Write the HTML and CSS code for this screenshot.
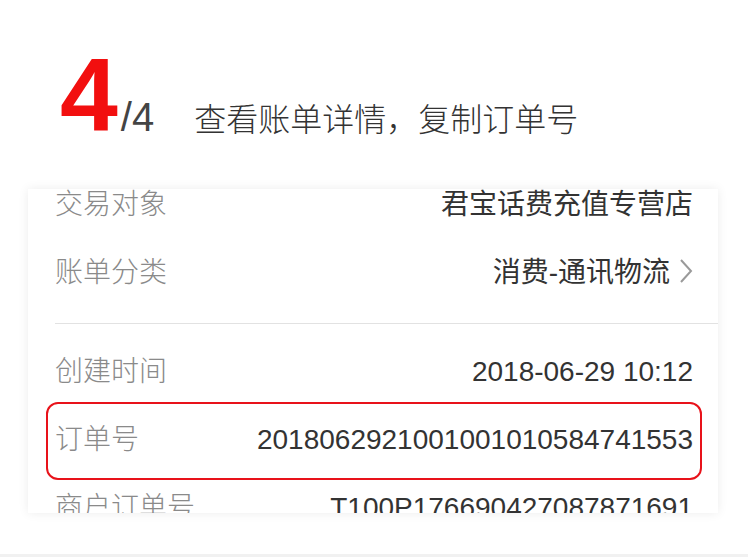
FILE: index.html
```html
<!DOCTYPE html>
<html lang="zh-CN">
<head>
<meta charset="utf-8">
<title>查看账单详情</title>
<link rel="stylesheet" href="styles.css">
</head>
<body>
<div class="page">
  <header class="step">
    <span class="step-num">4</span>
    <span class="step-total">/4</span>
    <span class="step-title">查看账单详情，复制订单号</span>
  </header>
  <section class="card">
    <div class="list">
      <div class="group first">
        <div class="row"><span class="label">交易对象</span><span class="value">君宝话费充值专营店</span></div>
        <div class="row"><span class="label">账单分类</span><span class="value with-arrow">消费-通讯物流<svg class="chev" width="14" height="26" viewBox="0 0 14 26"><polyline points="2,2 12,13 2,24" fill="none" stroke="#9a9a9a" stroke-width="2"/></svg></span></div>
      </div>
      <div class="divider"></div>
      <div class="group second">
        <div class="row"><span class="label">创建时间</span><span class="value">2018-06-29 10:12</span></div>
        <div class="row highlight"><span class="label">订单号</span><span class="value">2018062921001001010584741553</span></div>
        <div class="row"><span class="label">商户订单号</span><span class="value">T100P176690427087871691</span></div>
      </div>
    </div>
  </section>
  <div class="band"></div>
</div>
</body>
</html>
```
FILE: styles.css
```css
html, body {
  margin: 0;
  padding: 0;
  background: #ffffff;
}
body {
  font-family: "Liberation Sans", "Noto Sans CJK SC", sans-serif;
  overflow: hidden;
}
.page {
  width: 748px;
  height: 557px;
  display: flex;
  flex-direction: column;
  overflow: hidden;
}
.step {
  display: flex;
  align-items: baseline;
  padding-left: 60px;
  height: 146px;
  padding-top: 43px;
  box-sizing: border-box;
}
.step-num {
  font-family: "Liberation Sans", sans-serif;
  font-weight: bold;
  font-size: 104px;
  line-height: 1;
  color: #f20f0f;
}
.step-total {
  font-family: "Liberation Sans", sans-serif;
  font-size: 40px;
  line-height: 1;
  color: #444444;
  margin-left: 3px;
}
.step-title {
  font-family: "Noto Sans CJK SC", sans-serif;
  font-weight: 300;
  font-size: 32px;
  line-height: 1;
  color: #333333;
  margin-left: 40px;
}
.card {
  margin-top: 43px;
  margin-left: 28px;
  width: 690px;
  height: 324px;
  background: #ffffff;
  box-shadow: 0 0 10px rgba(0, 0, 0, 0.08);
  overflow: hidden;
  flex: none;
}
.list {
  margin-top: -18px;
}
.group {
  padding: 0 25px 0 27px;
}
.group.first {
  padding-bottom: 16px;
}
.group.second {
  padding-top: 14px;
}
.divider {
  margin-left: 27px;
  border-top: 1px solid #e2e2e2;
}
.row {
  height: 68px;
  display: flex;
  align-items: center;
  justify-content: space-between;
  font-size: 28px;
  line-height: 1;
  position: relative;
}
.label {
  color: #8a8a8a;
  font-weight: 300;
}
.value {
  color: #333333;
}
.with-arrow {
  display: flex;
  align-items: center;
  gap: 9px;
}
.chev {
  display: block;
  margin-top: -4px;
}
.highlight::after {
  content: "";
  position: absolute;
  top: -4px;
  bottom: -6px;
  left: -9px;
  right: -9px;
  border: 2px solid #e8121a;
  border-radius: 12px;
}
.band {
  margin-top: 41px;
  height: 10px;
  background: #f1f1f1;
  flex: none;
}
```
